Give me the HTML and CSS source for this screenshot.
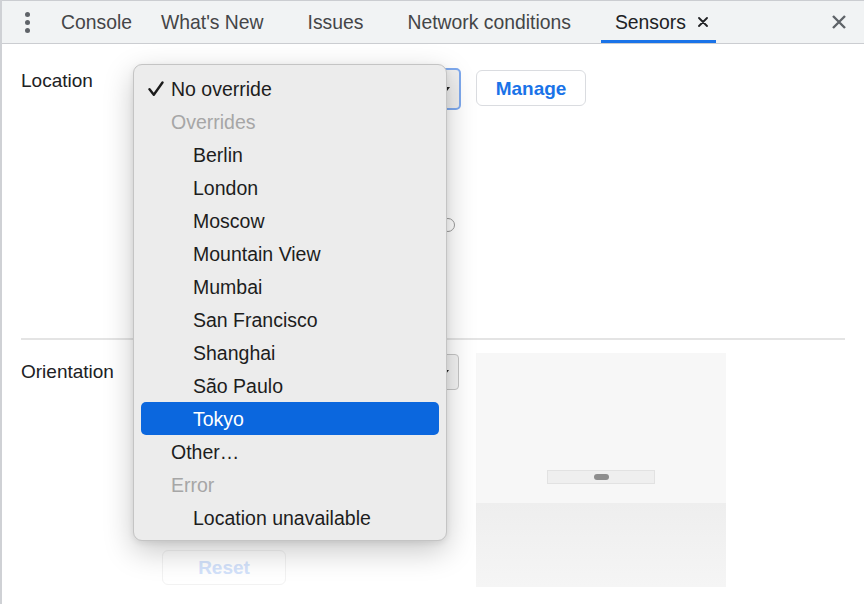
FILE: index.html
```html
<!DOCTYPE html>
<html>
<head>
<meta charset="utf-8">
<link rel="stylesheet" href="styles.css">
</head>
<body>
<div class="app">
  <div class="tabbar">
    <div class="kebab"><span></span><span></span><span></span></div>
    <div class="tab first">Console</div>
    <div class="tab closeable">What's New<span class="slot"></span></div>
    <div class="tab closeable">Issues<span class="slot"></span></div>
    <div class="tab closeable">Network conditions<span class="slot"></span></div>
    <div class="tab closeable active">Sensors<span class="slot x">
      <svg width="10" height="10" viewBox="0 0 10 10"><path d="M1 1L9 9M9 1L1 9" stroke="#202124" stroke-width="1.8" stroke-linecap="round"/></svg>
    </span></div>
    <div class="closeall">
      <svg width="16" height="16" viewBox="0 0 16 16"><path d="M2 2L14 14M14 2L2 14" stroke="#5f6368" stroke-width="2.4"/></svg>
    </div>
  </div>

  <div class="content">
    <section class="loc">
      <div class="row">
        <div class="label">Location</div>
        <div class="select focus"><span class="tri"></span></div>
        <button class="btn manage">Manage</button>
      </div>
      <div class="row toggle-row"><span class="ring"></span></div>
    </section>
    <div class="sep"></div>
    <section class="orient">
      <div class="label">Orientation</div>
      <div class="col">
        <div class="select plain"><span class="tri"></span></div>
        <button class="btn reset">Reset</button>
      </div>
      <div class="preview">
        <div class="top"><div class="bar"><span class="pill"></span></div></div>
        <div class="bottom"></div>
      </div>
    </section>
  </div>

  <div class="menu">
    <div class="item checked"><svg class="check" width="16" height="16" viewBox="0 0 16 16"><path d="M1.5 8.2L5.8 13.8L14.5 1.5" fill="none" stroke="#1b1b1b" stroke-width="2.4" stroke-linecap="round" stroke-linejoin="round"/></svg>No override</div>
    <div class="item group">Overrides</div>
    <div class="item sub">Berlin</div>
    <div class="item sub">London</div>
    <div class="item sub">Moscow</div>
    <div class="item sub">Mountain View</div>
    <div class="item sub">Mumbai</div>
    <div class="item sub">San Francisco</div>
    <div class="item sub">Shanghai</div>
    <div class="item sub">São Paulo</div>
    <div class="item sub sel">Tokyo</div>
    <div class="item">Other…</div>
    <div class="item group">Error</div>
    <div class="item sub">Location unavailable</div>
  </div>
</div>
</body>
</html>
```

FILE: styles.css
```css
* { box-sizing: border-box; }
html, body { margin: 0; padding: 0; }
body {
  background: #fff;
  font-family: "Liberation Sans", Arial, sans-serif;
  color: #202124;
}
.app {
  position: relative;
  width: 864px;
  height: 604px;
  border-left: 2px solid #cfd1d5;
  overflow: hidden;
}
.tabbar {
  display: flex;
  align-items: stretch;
  height: 44px;
  background: #f1f3f4;
  border-top: 1px solid #cbcdd1;
  border-bottom: 1px solid #cbcdd1;
  font-size: 19.35px;
}
.kebab {
  width: 45px;
  display: flex;
  flex-direction: column;
  justify-content: center;
  gap: 3px;
  padding-left: 23px;
}
.kebab span {
  width: 5px;
  height: 5px;
  border-radius: 50%;
  background: #5f6368;
}
.tab {
  display: flex;
  align-items: center;
  padding: 0 14px;
  color: #444547;
  position: relative;
}
.tab.first { padding-right: 15px; }
.tab.closeable { padding-right: 8px; }
.tab .slot {
  width: 10px;
  height: 10px;
  margin-left: 12px;
  display: flex;
}
.tab.active { color: #202124; }
.tab.active::after {
  content: "";
  position: absolute;
  left: 0; right: 0; bottom: 0;
  height: 3px;
  background: #1a73e8;
}
.closeall {
  margin-left: auto;
  margin-right: 17px;
  display: flex;
  align-items: center;
}

.content { padding: 0 19px; }
.label {
  width: 140px;
  font-size: 19px;
  color: #202124;
  flex: none;
}
.loc { height: 294px; padding-top: 24px; }
.loc .row { display: flex; align-items: flex-start; }
.loc .label { padding-top: 2px; }
.select {
  position: relative;
  width: 300px;
  height: 42px;
  border-radius: 5px;
  background: #efefef;
  flex: none;
}
.select.focus { border: 2px solid #7ea9ee; }
.select.plain {
  width: 298px;
  height: 36px;
  border: 1px solid #c6c6c6;
  border-radius: 4px;
  background: #f3f3f3;
}
.tri {
  position: absolute;
  right: 9px;
  top: 50%;
  margin-top: -2px;
  border-left: 3px solid transparent;
  border-right: 3px solid transparent;
  border-top: 4px solid #222;
}
.btn {
  font-family: "Liberation Sans", Arial, sans-serif;
  font-size: 19px;
  font-weight: bold;
  background: #fff;
  border-radius: 6px;
  padding: 0;
}
.manage {
  margin-left: 15px;
  margin-top: 2px;
  width: 110px;
  height: 36px;
  border: 1px solid #dadce0;
  color: #1a73e8;
  padding-top: 2px;
}
.toggle-row { margin-top: 108px; padding-left: 420px; }
.ring {
  width: 14px;
  height: 14px;
  border: 1.5px solid #9b9b9b;
  border-radius: 50%;
}
.sep {
  height: 2px;
  background: #e4e4e4;
}
.orient {
  display: flex;
  align-items: flex-start;
  padding-top: 13px;
}
.orient .label { padding-top: 8px; }
.col {
  width: 300px;
  height: 234px;
  display: flex;
  flex-direction: column;
  padding-top: 1px;
  flex: none;
}
.reset {
  margin-top: auto;
  margin-bottom: 2px;
  margin-left: 1px;
  width: 124px;
  height: 35px;
  border: 1px solid #f2f2f2;
  color: #d3e2fb;
}
.preview {
  margin-left: 15px;
  width: 250px;
  height: 234px;
  display: flex;
  flex-direction: column;
}
.preview .top {
  height: 150px;
  background: #f7f7f7;
  display: flex;
  align-items: flex-end;
  justify-content: center;
  padding-bottom: 19px;
}
.bar {
  width: 108px;
  height: 14px;
  background: #efefef;
  border: 1px solid #e2e2e2;
  display: flex;
  align-items: center;
  justify-content: center;
}
.pill {
  width: 15px;
  height: 6px;
  border-radius: 3px;
  background: #8e8e8e;
}
.preview .bottom {
  flex: 1;
  background: linear-gradient(#eeeeee, #f5f5f5);
}

.menu {
  position: absolute;
  left: 131px;
  top: 64px;
  width: 314px;
  height: 477px;
  background: #ececec;
  border: 1px solid #c4c4c4;
  border-radius: 9px;
  padding: 7px 0 6px;
  box-shadow: 0 10px 30px rgba(0,0,0,0.22), 0 2px 6px rgba(0,0,0,0.08);
  font-size: 19.5px;
  color: #1d1d1d;
}
.item {
  height: 33px;
  margin: 0 7px;
  padding-left: 30px;
  padding-top: 1px;
  display: flex;
  align-items: center;
  border-radius: 5px;
  white-space: nowrap;
}
.item.checked { padding-left: 7px; }
.check { margin-right: 7px; flex: none; }
.item.group { color: #a6a6a6; }
.item.sub { padding-left: 52px; }
.item.sel { background: #0b67de; color: #fff; }
```
